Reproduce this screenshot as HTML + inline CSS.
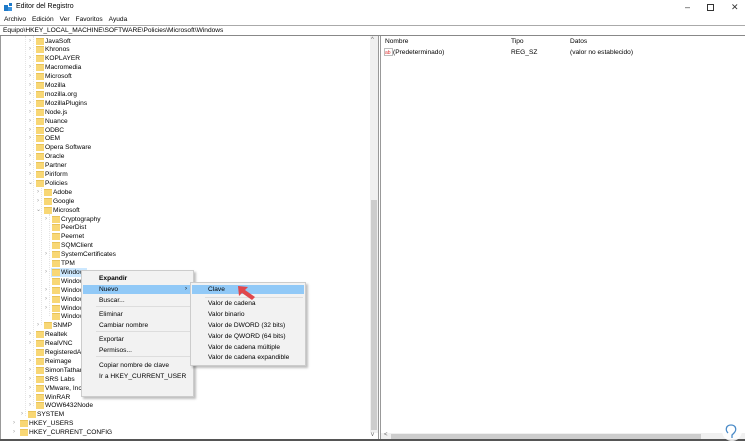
<!DOCTYPE html>
<html><head><meta charset="utf-8"><style>
*{margin:0;padding:0;box-sizing:border-box}
body{width:745px;height:441px;overflow:hidden;background:#fff;font-family:"Liberation Sans",sans-serif;font-size:6.6px;color:#000;position:relative}
.a{position:absolute;white-space:nowrap}
.r{position:absolute;height:9px;line-height:9px;white-space:nowrap}
.f{position:absolute;top:1px;width:8px;height:7px;background:#f8d775;border-top:1px solid #e8c35a}
.c{position:absolute;top:0;font-size:6px;color:#999}
.mi{position:absolute;left:17px;white-space:nowrap}
.sep{position:absolute;height:1px;background:#ddd}
</style></head><body>
<div class="a" style="left:0;top:0;width:745px;height:17px;background:#fff"></div>
<svg class="a" style="left:4px;top:3px" width="9" height="9"><rect x="0" y="2" width="4" height="6" fill="#1e79c8"/><rect x="4" y="4" width="4" height="4" fill="#3b94e0"/><rect x="5" y="0" width="3" height="3" fill="#1e79c8"/></svg>
<div class="a" style="left:16px;top:3px;font-size:7px">Editor del Registro</div>
<div class="a" style="left:685px;top:2px;font-size:9px;color:#333">–</div>
<div class="a" style="left:707px;top:4px;width:7px;height:7px;border:1px solid #333"></div>
<div class="a" style="left:731px;top:2px;font-size:9px;color:#333">✕</div>
<div class="a" style="left:0;top:16px;font-size:6.6px"><span style="margin-left:4px">Archivo</span><span style="margin-left:6px">Edición</span><span style="margin-left:6px">Ver</span><span style="margin-left:6px">Favoritos</span><span style="margin-left:6px">Ayuda</span></div>
<div class="a" style="left:0;top:25px;width:745px;height:11px;border-top:1px solid #aaa;border-bottom:1px solid #888;padding-left:3px;line-height:9px">Equipo\HKEY_LOCAL_MACHINE\SOFTWARE\Policies\Microsoft\Windows</div>
<div class="a" style="left:0;top:36px;width:1px;height:405px;background:#999"></div>
<div class="a" style="left:370px;top:36px;width:8px;height:397px;background:#f0f0f0"></div>
<div class="a" style="left:371px;top:200px;width:6px;height:230px;background:#cdcdcd"></div>
<div class="a" style="left:371px;top:37px;font-size:6px;color:#666">^</div>
<div class="a" style="left:371px;top:432px;font-size:6px;color:#666">v</div>
<div class="a" style="left:378px;top:36px;width:1px;height:405px;background:#999"></div>
<div class="a" style="left:380px;top:36px;width:1px;height:405px;background:#999"></div>
<div class="a" style="left:381px;top:433px;width:364px;height:7px;background:#f0f0f0"></div>
<div class="a" style="left:391px;top:434px;width:310px;height:5px;background:#cdcdcd"></div>
<div class="a" style="left:384px;top:432px;font-size:6px;color:#666">&lt;</div>
<div class="a" style="left:0;top:439px;width:745px;height:2px;background:#555"></div>
<div class="a" style="left:385px;top:38px">Nombre</div>
<div class="a" style="left:511px;top:38px">Tipo</div>
<div class="a" style="left:570px;top:38px">Datos</div>
<svg class="a" style="left:384px;top:48px" width="9" height="8"><rect x="0.5" y="0.5" width="8" height="7" fill="#fff" stroke="#bbb"/><text x="1" y="6" font-size="5" fill="#d33" font-family="Liberation Sans">ab</text></svg>
<div class="a" style="left:393px;top:49px">(Predeterminado)</div>
<div class="a" style="left:511px;top:49px">REG_SZ</div>
<div class="a" style="left:570px;top:49px">(valor no establecido)</div>
<div class="a" style="left:25px;top:36px;width:0;height:380px;border-left:1px dotted #e4e4e4"></div>
<div class="a" style="left:33px;top:36px;width:0;height:370px;border-left:1px dotted #e4e4e4"></div>
<div class="a" style="left:41px;top:188px;width:0;height:137px;border-left:1px dotted #e4e4e4"></div>
<div class="a" style="left:49px;top:214px;width:0;height:102px;border-left:1px dotted #e4e4e4"></div>
<div class="r" style="top:36.5px;left:0"><span class="c" style="left:29px">›</span><span class="f" style="left:36px"></span><span class="a" style="left:45px">JavaSoft</span></div>
<div class="r" style="top:45.4px;left:0"><span class="c" style="left:29px">›</span><span class="f" style="left:36px"></span><span class="a" style="left:45px">Khronos</span></div>
<div class="r" style="top:54.3px;left:0"><span class="c" style="left:29px">›</span><span class="f" style="left:36px"></span><span class="a" style="left:45px">KOPLAYER</span></div>
<div class="r" style="top:63.2px;left:0"><span class="c" style="left:29px">›</span><span class="f" style="left:36px"></span><span class="a" style="left:45px">Macromedia</span></div>
<div class="r" style="top:72.1px;left:0"><span class="c" style="left:29px">›</span><span class="f" style="left:36px"></span><span class="a" style="left:45px">Microsoft</span></div>
<div class="r" style="top:81px;left:0"><span class="c" style="left:29px">›</span><span class="f" style="left:36px"></span><span class="a" style="left:45px">Mozilla</span></div>
<div class="r" style="top:89.9px;left:0"><span class="c" style="left:29px">›</span><span class="f" style="left:36px"></span><span class="a" style="left:45px">mozilla.org</span></div>
<div class="r" style="top:98.8px;left:0"><span class="c" style="left:29px">›</span><span class="f" style="left:36px"></span><span class="a" style="left:45px">MozillaPlugins</span></div>
<div class="r" style="top:107.7px;left:0"><span class="c" style="left:29px">›</span><span class="f" style="left:36px"></span><span class="a" style="left:45px">Node.js</span></div>
<div class="r" style="top:116.6px;left:0"><span class="c" style="left:29px">›</span><span class="f" style="left:36px"></span><span class="a" style="left:45px">Nuance</span></div>
<div class="r" style="top:125.5px;left:0"><span class="c" style="left:29px">›</span><span class="f" style="left:36px"></span><span class="a" style="left:45px">ODBC</span></div>
<div class="r" style="top:134.4px;left:0"><span class="c" style="left:29px">›</span><span class="f" style="left:36px"></span><span class="a" style="left:45px">OEM</span></div>
<div class="r" style="top:143.3px;left:0"><span class="f" style="left:36px"></span><span class="a" style="left:45px">Opera Software</span></div>
<div class="r" style="top:152.2px;left:0"><span class="c" style="left:29px">›</span><span class="f" style="left:36px"></span><span class="a" style="left:45px">Oracle</span></div>
<div class="r" style="top:161.1px;left:0"><span class="c" style="left:29px">›</span><span class="f" style="left:36px"></span><span class="a" style="left:45px">Partner</span></div>
<div class="r" style="top:170px;left:0"><span class="c" style="left:29px">›</span><span class="f" style="left:36px"></span><span class="a" style="left:45px">Piriform</span></div>
<div class="r" style="top:178.9px;left:0"><span class="c" style="left:28px">⌄</span><span class="f" style="left:36px"></span><span class="a" style="left:45px">Policies</span></div>
<div class="r" style="top:187.8px;left:0"><span class="c" style="left:37px">›</span><span class="f" style="left:44px"></span><span class="a" style="left:53px">Adobe</span></div>
<div class="r" style="top:196.7px;left:0"><span class="c" style="left:37px">›</span><span class="f" style="left:44px"></span><span class="a" style="left:53px">Google</span></div>
<div class="r" style="top:205.6px;left:0"><span class="c" style="left:36px">⌄</span><span class="f" style="left:44px"></span><span class="a" style="left:53px">Microsoft</span></div>
<div class="r" style="top:214.5px;left:0"><span class="c" style="left:45px">›</span><span class="f" style="left:52px"></span><span class="a" style="left:61px">Cryptography</span></div>
<div class="r" style="top:223.4px;left:0"><span class="f" style="left:52px"></span><span class="a" style="left:61px">PeerDist</span></div>
<div class="r" style="top:232.3px;left:0"><span class="f" style="left:52px"></span><span class="a" style="left:61px">Peernet</span></div>
<div class="r" style="top:241.2px;left:0"><span class="f" style="left:52px"></span><span class="a" style="left:61px">SQMClient</span></div>
<div class="r" style="top:250.1px;left:0"><span class="c" style="left:45px">›</span><span class="f" style="left:52px"></span><span class="a" style="left:61px">SystemCertificates</span></div>
<div class="r" style="top:259px;left:0"><span class="f" style="left:52px"></span><span class="a" style="left:61px">TPM</span></div>
<div class="r" style="top:267.9px;left:0"><span class="c" style="left:45px">›</span><span class="a" style="left:51px;top:0;width:36px;height:9px;background:#cce8ff"></span><span class="f" style="left:52px"></span><span class="a" style="left:61px">Windows</span></div>
<div class="r" style="top:276.8px;left:0"><span class="f" style="left:52px"></span><span class="a" style="left:61px">Window</span></div>
<div class="r" style="top:285.7px;left:0"><span class="c" style="left:45px">›</span><span class="f" style="left:52px"></span><span class="a" style="left:61px">Window</span></div>
<div class="r" style="top:294.6px;left:0"><span class="c" style="left:45px">›</span><span class="f" style="left:52px"></span><span class="a" style="left:61px">Window</span></div>
<div class="r" style="top:303.5px;left:0"><span class="c" style="left:45px">›</span><span class="f" style="left:52px"></span><span class="a" style="left:61px">Window</span></div>
<div class="r" style="top:312.4px;left:0"><span class="f" style="left:52px"></span><span class="a" style="left:61px">Window</span></div>
<div class="r" style="top:321.3px;left:0"><span class="c" style="left:37px">›</span><span class="f" style="left:44px"></span><span class="a" style="left:53px">SNMP</span></div>
<div class="r" style="top:330.2px;left:0"><span class="c" style="left:29px">›</span><span class="f" style="left:36px"></span><span class="a" style="left:45px">Realtek</span></div>
<div class="r" style="top:339.1px;left:0"><span class="c" style="left:29px">›</span><span class="f" style="left:36px"></span><span class="a" style="left:45px">RealVNC</span></div>
<div class="r" style="top:348px;left:0"><span class="f" style="left:36px"></span><span class="a" style="left:45px">RegisteredApp</span></div>
<div class="r" style="top:356.9px;left:0"><span class="c" style="left:29px">›</span><span class="f" style="left:36px"></span><span class="a" style="left:45px">Reimage</span></div>
<div class="r" style="top:365.8px;left:0"><span class="c" style="left:29px">›</span><span class="f" style="left:36px"></span><span class="a" style="left:45px">SimonTatham</span></div>
<div class="r" style="top:374.7px;left:0"><span class="c" style="left:29px">›</span><span class="f" style="left:36px"></span><span class="a" style="left:45px">SRS Labs</span></div>
<div class="r" style="top:383.6px;left:0"><span class="c" style="left:29px">›</span><span class="f" style="left:36px"></span><span class="a" style="left:45px">VMware, Inc.</span></div>
<div class="r" style="top:392.5px;left:0"><span class="c" style="left:29px">›</span><span class="f" style="left:36px"></span><span class="a" style="left:45px">WinRAR</span></div>
<div class="r" style="top:401.4px;left:0"><span class="c" style="left:29px">›</span><span class="f" style="left:36px"></span><span class="a" style="left:45px">WOW6432Node</span></div>
<div class="r" style="top:410.3px;left:0"><span class="c" style="left:21px">›</span><span class="f" style="left:28px"></span><span class="a" style="left:37px">SYSTEM</span></div>
<div class="r" style="top:419.2px;left:0"><span class="c" style="left:13px">›</span><span class="f" style="left:20px"></span><span class="a" style="left:29px">HKEY_USERS</span></div>
<div class="r" style="top:428.1px;left:0"><span class="c" style="left:13px">›</span><span class="f" style="left:20px"></span><span class="a" style="left:29px">HKEY_CURRENT_CONFIG</span></div>
<div class="a" style="left:81px;top:270px;width:113px;height:127px;background:#f2f2f2;border:1px solid #ccc;box-shadow:2px 2px 2px rgba(0,0,0,.25)">
<div class="mi" style="top:4px;font-weight:bold">Expandir</div>
<div class="a" style="left:1px;top:14px;width:110px;height:9px;background:#91c9f7"></div>
<div class="mi" style="top:14px;line-height:9px">Nuevo</div>
<div class="a" style="left:103px;top:14px;line-height:9px;font-size:6px">›</div>
<div class="mi" style="top:26px">Buscar...</div>
<div class="sep" style="left:14px;top:35px;width:96px"></div>
<div class="mi" style="top:40px">Eliminar</div>
<div class="mi" style="top:51px">Cambiar nombre</div>
<div class="sep" style="left:14px;top:60px;width:96px"></div>
<div class="mi" style="top:65px">Exportar</div>
<div class="mi" style="top:76px">Permisos...</div>
<div class="sep" style="left:14px;top:85px;width:96px"></div>
<div class="mi" style="top:91px">Copiar nombre de clave</div>
<div class="mi" style="top:102px">Ir a HKEY_CURRENT_USER</div>
</div>
<div class="a" style="left:190px;top:282px;width:116px;height:84px;background:#f2f2f2;border:1px solid #ccc;box-shadow:2px 2px 2px rgba(0,0,0,.25)">
<div class="a" style="left:1px;top:2px;width:112px;height:9px;background:#91c9f7"></div>
<div class="mi" style="top:2px;line-height:9px">Clave</div>
<div class="sep" style="left:14px;top:14px;width:98px"></div>
<div class="mi" style="top:17px">Valor de cadena</div>
<div class="mi" style="top:28px">Valor binario</div>
<div class="mi" style="top:39px">Valor de DWORD (32 bits)</div>
<div class="mi" style="top:50px">Valor de QWORD (64 bits)</div>
<div class="mi" style="top:61px">Valor de cadena múltiple</div>
<div class="mi" style="top:71px">Valor de cadena expandible</div>
</div>
<svg class="a" style="left:236px;top:284px" width="22" height="18"><polygon points="2,2 12,3 9,6 19,13 16,16 6,9 3,12" fill="#e0474c"/></svg>
<svg class="a" style="left:720px;top:420px" width="24" height="21"><circle cx="12" cy="11" r="10" fill="#fff" opacity=".85"/><path d="M8 13c-3-3-2-8 3-8s6 5 3 8l-2 2v3" fill="none" stroke="#4a8ac7" stroke-width="1.3"/></svg>
</body></html>
